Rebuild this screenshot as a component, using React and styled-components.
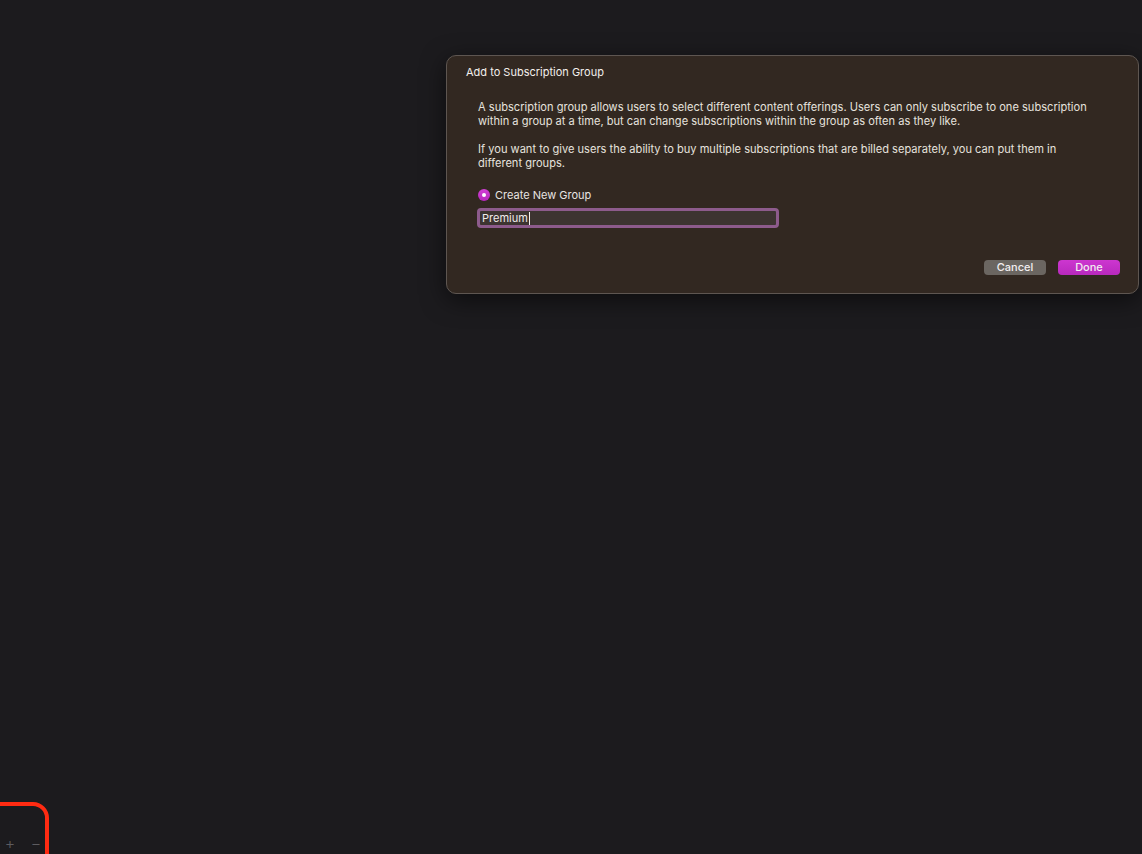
import styled, { createGlobalStyle } from "styled-components";

const GlobalStyle = createGlobalStyle`
  html, body {
    margin: 0;
    padding: 0;
    background: #1c1b1e;
  }
  body {
    font-family: Inter, "Liberation Sans", sans-serif;
    -webkit-font-smoothing: antialiased;
  }
`;

const Window = styled.div`
  width: 1142px;
  height: 854px;
  display: flex;
  flex-direction: column;
  background: #1c1b1e;
  overflow: hidden;
  position: relative;
`;

const Content = styled.div`
  flex: 1;
  padding: 55px 3px 0 446px;
`;

const Sheet = styled.div`
  width: 693px;
  height: 239px;
  box-sizing: border-box;
  background: #322821;
  border: 1px solid #5e5651;
  border-radius: 10px;
  box-shadow: 0 6px 24px rgba(0, 0, 0, 0.55);
  padding: 9px 18px 0 19px;
  display: flex;
  flex-direction: column;
  color: #e8e4e1;
`;

const Title = styled.div`
  font-size: 11px;
  font-weight: 400;
  line-height: 14px;
  color: #f3efec;
`;

const Body = styled.div`
  padding: 21px 0 0 12px;
  display: flex;
  flex-direction: column;
`;

const Paragraph = styled.p`
  margin: 0 0 14px;
  font-size: 11.1px;
  line-height: 14px;
  color: #e6e2de;
  max-width: 614px;
`;

const RadioRow = styled.label`
  display: flex;
  align-items: center;
  gap: 5px;
  font-size: 11px;
  line-height: 14px;
  color: #e8e4e1;
  margin-top: 4px;
`;

const Radio = styled.span`
  width: 12px;
  height: 12px;
  border-radius: 50%;
  background: linear-gradient(#d23fd6, #b627bd);
  display: flex;
  align-items: center;
  justify-content: center;
  &::after {
    content: "";
    width: 4px;
    height: 4px;
    border-radius: 50%;
    background: #fff;
  }
`;

const Field = styled.div`
  margin-top: 6px;
  margin-left: -1px;
  width: 302px;
  height: 20px;
  box-sizing: border-box;
  border: 3px solid #8d5b8c;
  border-radius: 4px;
  background: #3d3431;
  display: flex;
  align-items: center;
  padding: 0 2px;
  font-size: 11px;
  color: #f0ecea;
`;

const Caret = styled.span`
  width: 1px;
  height: 13px;
  background: #f4f0ee;
  margin-left: 1px;
`;

const Footer = styled.div`
  margin-top: auto;
  margin-bottom: 18px;
  display: flex;
  justify-content: flex-end;
  gap: 12px;
`;

const Button = styled.button`
  width: 62px;
  height: 15px;
  border: none;
  border-radius: 4px;
  font-family: inherit;
  font-size: 11px;
  font-weight: 500;
  line-height: 15px;
  padding: 0;
  color: #f2eef0;
  background: ${(p) =>
    p.$primary ? "linear-gradient(#cd36d0, #b829bd)" : "#6b6661"};
`;

const BottomBar = styled.div`
  height: 22px;
  display: flex;
  align-items: center;
  gap: 12px;
  padding: 0 0 0 3px;
  color: #5d5c60;
  font-size: 16px;
  font-weight: 300;
`;

const BarGlyph = styled.span`
  width: 14px;
  text-align: center;
  line-height: 16px;
`;

const Highlight = styled.div`
  position: absolute;
  left: -30px;
  top: 802px;
  width: 71px;
  height: 80px;
  border: 4px solid #ff2b12;
  border-radius: 16px;
  pointer-events: none;
`;

export default function App() {
  return (
    <>
      <GlobalStyle />
      <Window>
        <Content>
          <Sheet>
            <Title>Add to Subscription Group</Title>
            <Body>
              <Paragraph>
                A subscription group allows users to select different content
                offerings. Users can only subscribe to one subscription within
                a group at a time, but can change subscriptions within the
                group as often as they like.
              </Paragraph>
              <Paragraph>
                If you want to give users the ability to buy multiple
                subscriptions that are billed separately, you can put them in
                different groups.
              </Paragraph>
              <RadioRow>
                <Radio />
                Create New Group
              </RadioRow>
              <Field>
                Premium
                <Caret />
              </Field>
            </Body>
            <Footer>
              <Button>Cancel</Button>
              <Button $primary>Done</Button>
            </Footer>
          </Sheet>
        </Content>
        <BottomBar>
          <BarGlyph>+</BarGlyph>
          <BarGlyph>−</BarGlyph>
        </BottomBar>
        <Highlight />
      </Window>
    </>
  );
}
